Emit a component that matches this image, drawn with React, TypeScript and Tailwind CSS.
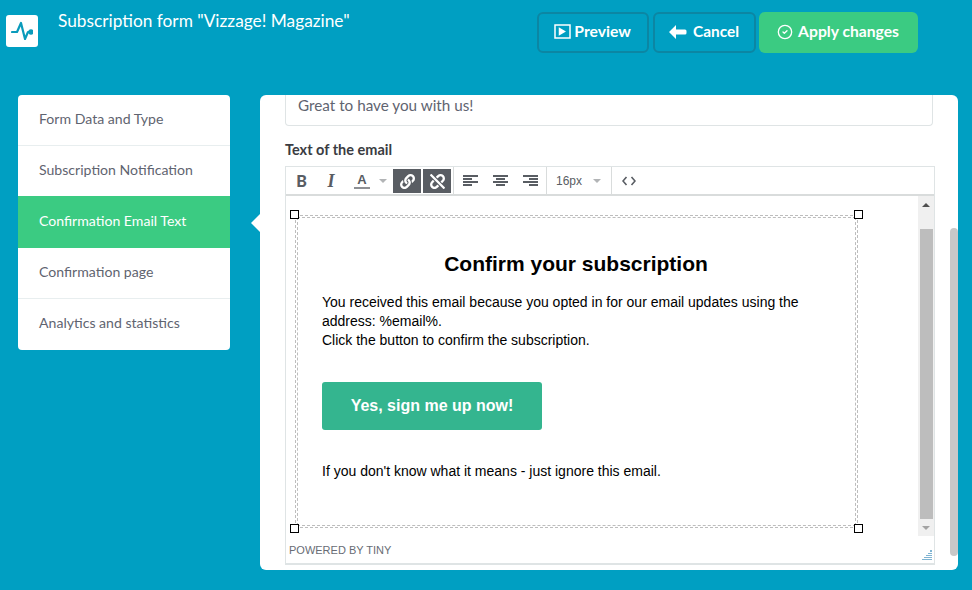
import { CircleCheck } from 'lucide-react';
import { FaLink, FaUnlink } from 'react-icons/fa';

const navItems = [
  { label: 'Form Data and Type', row: 'h-[51px] pt-[14px] border-b border-[#e8eeef]' },
  { label: 'Subscription Notification', row: 'h-[50px] pt-[14px]' },
  { label: 'Confirmation Email Text', row: 'h-[52px] pt-[15px] bg-[#3bcb82] text-white' },
  { label: 'Confirmation page', row: 'h-[51px] pt-[14px] border-b border-[#e8eeef]' },
  { label: 'Analytics and statistics', row: 'h-[51px] pt-[14px]' },
];

function Handle({ className }: { className: string }) {
  return <span className={`absolute w-[9px] h-[9px] bg-white border border-black ${className}`} />;
}

function AlignIcon({ lines }: { lines: number[][] }) {
  return (
    <svg width="15" height="12" viewBox="0 0 15 12" className="text-[#595d63]" fill="currentColor">
      {lines.map(([x, w], i) => (
        <rect key={i} x={x} y={i * 3} width={w} height="2" />
      ))}
    </svg>
  );
}

function Caret({ className = '' }: { className?: string }) {
  return <span className={`w-0 h-0 border-x-[4px] border-x-transparent border-t-[4px] border-t-[#b2b4b6] ${className}`} />;
}

function Toolbar() {
  return (
    <div className="h-[29px] flex border-b-2 border-[#d9dcdc] font-['Liberation_Sans',sans-serif] text-[#595d63]">
      <div className="flex items-center w-[168px] pl-[2px] pt-[1px] gap-[2px] border-r border-[#d9dcdc]">
        <span className="w-[27px] text-center font-['Lato',sans-serif] font-black text-[16px]">B</span>
        <span className="w-[28px] text-center font-['Liberation_Serif',serif] italic font-bold text-[18px]">I</span>
        <span className="w-[26px] flex flex-col items-center ml-[2px]">
          <span className="font-bold text-[13px] leading-[13px]">A</span>
          <span className="w-[16px] h-[2px] bg-[#8e9094] mt-[1px]" />
        </span>
        <Caret className="ml-[2px] mr-[4px]" />
        <span className="w-[28px] h-[24px] bg-[#595d63] flex items-center justify-center text-white">
          <FaLink size={15} />
        </span>
        <span className="w-[28px] h-[24px] bg-[#595d63] flex items-center justify-center text-white">
          <FaUnlink size={15} />
        </span>
      </div>
      <div className="flex items-center w-[93px] pl-[9px] pt-[1px] gap-[15px] border-r border-[#d9dcdc]">
        <AlignIcon lines={[[0, 15], [0, 9], [0, 15], [0, 9]]} />
        <AlignIcon lines={[[0, 15], [3, 9], [0, 15], [3, 9]]} />
        <AlignIcon lines={[[0, 15], [6, 9], [0, 15], [6, 9]]} />
      </div>
      <div className="flex items-center w-[65px] pl-[9px] pt-[1px] gap-[11px] border-r border-[#d9dcdc] text-[12px]">
        <span>16px</span>
        <Caret />
      </div>
      <div className="flex items-center pl-[10px] pt-[1px]">
        <svg width="14" height="10" viewBox="0 0 14 10" fill="none" stroke="currentColor" strokeWidth="1.6">
          <path d="M4.5 1 1 5l3.5 4M9.5 1 13 5 9.5 9" />
        </svg>
      </div>
    </div>
  );
}

function EmailBody() {
  return (
    <div className="relative w-[563px] h-[313px] mt-[19px] ml-[9px] border border-dashed border-[#bdbdbd] p-[1px]">
      <Handle className="left-[-6px] top-[-6px]" />
      <Handle className="right-[-6px] top-[-6px]" />
      <Handle className="left-[-6px] bottom-[-6px]" />
      <Handle className="right-[-6px] bottom-[-6px]" />
      <div className="h-full border border-dashed border-[#bdbdbd] pl-[24px] pr-[25px] pt-[34px] text-black font-['Liberation_Sans',sans-serif]">
        <h2 className="text-center font-bold text-[21px] leading-[24px]">Confirm your subscription</h2>
        <p className="mt-[17px] text-[14px] leading-[19px] w-[500px]">
          You received this email because you opted in for our email updates using the address: %email%.
          <br />
          Click the button to confirm the subscription.
        </p>
        <div className="mt-[32px] w-[220px] h-[48px] rounded-[3px] bg-[#34b58f] text-white font-bold text-[16px] flex items-center justify-center">
          Yes, sign me up now!
        </div>
        <p className="mt-[32px] text-[14px] leading-[19px]">If you don't know what it means - just ignore this email.</p>
      </div>
    </div>
  );
}

function Editor() {
  return (
    <div className="mt-[7px] w-[650px] h-[399px] border border-[#dfe4e5] border-b-2 flex flex-col">
      <Toolbar />
      <div className="flex h-[340px]">
        <div className="flex-1 overflow-hidden">
          <EmailBody />
        </div>
        <div className="w-[16px] bg-[#f0f0f0] flex flex-col items-center">
          <span className="mt-[7px] w-0 h-0 border-x-[4px] border-x-transparent border-b-[4px] border-b-[#505050]" />
          <div className="mt-[22px] w-[13px] h-[290px] bg-[#bdbdbd]" />
          <span className="mt-[7px] w-0 h-0 border-x-[4px] border-x-transparent border-t-[4px] border-t-[#a3a3a3]" />
        </div>
      </div>
      <div className="flex-1 relative flex items-center pl-[3px] pt-[1px] font-['Liberation_Sans',sans-serif] text-[11px] text-[#686c74]">
        POWERED BY TINY
        <svg width="10" height="10" viewBox="0 0 10 10" className="absolute right-[2px] bottom-[3px]" fill="#7fb4d2">
          <path d="M8 0h2v2H8zM6 3h4v1H6zM4 5h6v1H4zM2 7h8v1H2zM0 9h10v1H0z" />
        </svg>
      </div>
    </div>
  );
}

export default function App() {
  return (
    <div className="w-[972px] h-[590px] overflow-hidden bg-[#009fc2] font-['Lato',sans-serif]">
      <header className="h-[95px] flex items-start">
        <div className="ml-[6px] mt-[15px] w-[32px] h-[32px] rounded-[3px] bg-white flex items-center justify-center">
          <svg width="22" height="20" viewBox="0 0 22 20" fill="none" stroke="#0a9bbb" strokeWidth="2.2" strokeLinejoin="round" strokeLinecap="round">
            <path d="M1 11h5l4-9 4 16 3-7h3" />
            <circle cx="20" cy="11" r="1.6" fill="#0a9bbb" />
          </svg>
        </div>
        <h1 className="ml-[20px] mt-[11px] text-[17.3px] leading-[20px] text-white">Subscription form "Vizzage! Magazine"</h1>
        <div className="ml-[187px] mt-[12px] flex gap-[4px] text-white font-bold text-[15.7px]">
          <button className="w-[112px] h-[41px] pb-[2px] rounded-[6px] border-2 border-[#0c86a3] flex items-center justify-center gap-[3px]">
            <svg width="17" height="15" viewBox="0 0 17 15" fill="none" stroke="white" strokeWidth="1.5">
              <rect x="1" y="1" width="15" height="13" />
              <path d="M5.500 4.500v6l5-3z" fill="white" />
            </svg>
            Preview
          </button>
          <button className="w-[103px] h-[41px] pb-[2px] rounded-[6px] border-2 border-[#0c86a3] flex items-center justify-center gap-[6px] text-[15.4px]">
            <svg width="18" height="14" viewBox="0 0 18 14" fill="white">
              <path d="M7 0 0 7l7 7V9.500h9A1.500 1.500 0 0 0 17.500 8V6A1.500 1.500 0 0 0 16 4.500H7z" />
            </svg>
            Cancel
          </button>
          <button className="-ml-[1px] w-[159px] h-[41px] pb-[2px] rounded-[6px] bg-[#3bcb82] flex items-center justify-center gap-[5px]">
            <CircleCheck size={16} strokeWidth={2} />
            Apply changes
          </button>
        </div>
      </header>

      <div className="flex items-start pl-[18px]">
        <nav className="w-[212px] rounded-[4px] bg-white overflow-hidden text-[#5f6470]">
          {navItems.map((item) => (
            <div key={item.label} className={`pl-[21px] text-[14.1px] leading-[20px] ${item.row}`}>
              {item.label}
            </div>
          ))}
        </nav>

        <div className="ml-[21px] mt-[119px] w-0 h-0 border-y-[9px] border-y-transparent border-r-[9px] border-r-white" />

        <main className="w-[698px] h-[475px] rounded-[6px] bg-white relative overflow-hidden pl-[25px]">
          <div className="h-[31px] w-[648px] rounded-b-[4px] border border-t-0 border-[#dfe4e5] pl-[12px] text-[#5f6470] text-[15.25px] leading-[21px]">
            Great to have you with us!
          </div>
          <label className="block mt-[14px] h-[19px] text-[14.5px] leading-[19px] font-bold text-[#3a3c42]">Text of the email</label>
          <Editor />
          <div className="absolute right-0 top-[133px] w-[8px] h-[328px] rounded-full bg-[#c8c8c8]" />
        </main>
      </div>
    </div>
  );
}
